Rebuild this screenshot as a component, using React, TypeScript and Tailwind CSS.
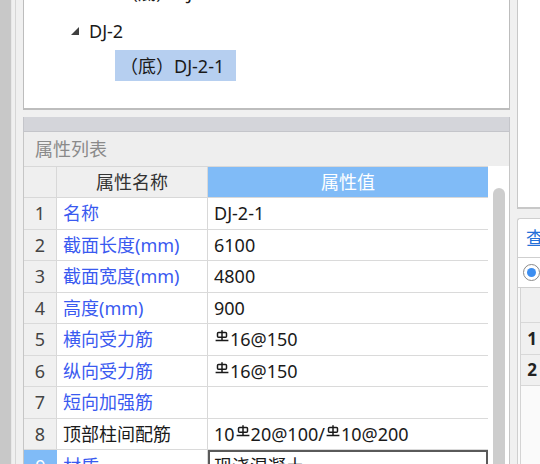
import type { ReactNode } from 'react';

// 钢筋等级符号（三级钢）
function Rebar() {
  return (
    <svg
      viewBox="0 0 14 12"
      className="mx-[1px] inline-block h-[12px] w-[14px] align-[4px]"
      fill="none"
      stroke="#1a1a1a"
      strokeWidth={1.5}
    >
      <rect x="2.5" y="2.6" width="9" height="4.6" rx="1" />
      <path d="M7 0.2v10.4M0.6 10.6h12.8" />
    </svg>
  );
}

// '§' 代表钢筋符号
function renderValue(value: string): ReactNode {
  const parts = value.split('§');
  return parts.map((p, i) => (
    <span key={i}>
      {i > 0 && <Rebar />}
      {p}
    </span>
  ));
}

interface Row {
  name: string;
  value: string;
  blue: boolean;
}

const rows: Row[] = [
  { name: '名称', value: 'DJ-2-1', blue: true },
  { name: '截面长度(mm)', value: '6100', blue: true },
  { name: '截面宽度(mm)', value: '4800', blue: true },
  { name: '高度(mm)', value: '900', blue: true },
  { name: '横向受力筋', value: '§16@150', blue: true },
  { name: '纵向受力筋', value: '§16@150', blue: true },
  { name: '短向加强筋', value: '', blue: true },
  { name: '顶部柱间配筋', value: '10§20@100/§10@200', blue: false },
];

function TreePanel() {
  return (
    <div className="h-[110px] shrink-0 overflow-hidden border-x border-b-2 border-[#bdbdbd] bg-white text-[#1a1a1a]">
      <div className="-mt-[25px] flex h-[35px] items-center whitespace-nowrap pl-[96px]">
        （底）DJ-1-1
      </div>
      <div className="mt-[3px] flex h-[35px] items-center pl-[47px]">
        <svg viewBox="0 0 8 8" className="h-[8px] w-[8px]">
          <path d="M8 0L8 8L0 8Z" fill="#404040" />
        </svg>
        <span className="ml-[10px]">DJ-2</span>
      </div>
      <div className="flex h-[35px] items-center pl-[91px]">
        <span className="flex h-[31px] w-[121px] items-center whitespace-nowrap bg-[#b6cff0] pl-[5px]">
          （底）DJ-2-1
        </span>
      </div>
    </div>
  );
}

function PropertyTable() {
  return (
    <div className="flex min-h-0 flex-1 overflow-hidden bg-white">
      <div className="w-[464px] shrink-0">
        {/* 表头 */}
        <div className="flex h-[32px] border-y border-[#d8d8d8]">
          <div className="w-[33px] shrink-0 border-r border-[#d8d8d8] bg-[#efefef]" />
          <div className="flex w-[151px] shrink-0 items-center justify-center border-r border-[#d8d8d8] bg-[#efefef] text-[#333]">
            属性名称
          </div>
          <div className="flex w-[280px] shrink-0 items-center justify-center bg-[#80bbf7] text-white">
            属性值
          </div>
        </div>

        {rows.map((row, i) => (
          <div key={i} className="flex h-[31.5px] border-b border-[#dadada]">
            <div className="flex w-[33px] shrink-0 items-center justify-center border-r border-[#d8d8d8] bg-[#f0f0f0] text-[#444]">
              {i + 1}
            </div>
            <div
              className={`flex w-[151px] shrink-0 items-center whitespace-nowrap border-r border-[#d8d8d8] pl-[6px] ${
                row.blue ? 'text-[#3a5af0]' : 'text-[#1a1a1a]'
              }`}
            >
              {row.name}
            </div>
            <div className="flex w-[280px] shrink-0 items-center whitespace-nowrap pl-[6px] text-[#1a1a1a]">
              <span>{renderValue(row.value)}</span>
            </div>
          </div>
        ))}

        {/* 当前编辑行 */}
        <div className="flex h-[31.5px]">
          <div className="flex w-[33px] shrink-0 items-center justify-center bg-[#80bbf7] text-white">
            9
          </div>
          <div className="flex w-[151px] shrink-0 items-center border-r border-[#d8d8d8] pl-[6px] text-[#3a5af0]">
            材质
          </div>
          <div className="flex w-[280px] shrink-0 items-center border-2 border-[#5a5a5a] pl-[4px] text-[#1a1a1a]">
            现浇混凝土
          </div>
        </div>
      </div>

      {/* 滚动条 */}
      <div className="w-[21px] shrink-0 pl-[5px] pt-[22px]">
        <div className="h-[400px] w-[12px] rounded-full bg-[#cdcdcd]" />
      </div>
    </div>
  );
}

function RightPanel() {
  return (
    <div className="flex w-[23px] shrink-0 flex-col overflow-hidden">
      <div className="h-[209px] shrink-0 border-b-2 border-l border-[#c8c8c8] bg-white" />
      <div className="h-[9px] shrink-0" />
      <div className="flex h-[39px] shrink-0 items-center overflow-hidden whitespace-nowrap rounded-tl-[3px] border-l border-t border-[#cfcfcf] bg-white pl-[8px] text-[#2470d8]">
        查看
      </div>
      <div className="flex h-[30px] shrink-0 items-center overflow-hidden border-l border-t border-[#cfcfcf] bg-white pl-[5px]">
        <div className="flex h-[17px] w-[17px] shrink-0 items-center justify-center rounded-full border border-[#8a8a8a] bg-white">
          <div className="h-[9px] w-[9px] rounded-full bg-[#3d8ef0]" />
        </div>
      </div>
      <div className="flex flex-1 flex-col border-l border-t border-[#cfcfcf] bg-[#fafafa] pl-[2px]">
        <div className="flex flex-1 flex-col border-l border-[#d4d4d4]">
          <div className="h-[35px] shrink-0 border-b border-[#d8d8d8] bg-[#f0f0f0]" />
          <div className="flex h-[31.5px] w-[22px] shrink-0 items-center justify-center border-b border-[#d8d8d8] bg-[#f0f0f0] text-[17px] font-bold text-[#222]">
            1
          </div>
          <div className="flex h-[31.5px] w-[22px] shrink-0 items-center justify-center border-b border-[#d8d8d8] bg-[#f0f0f0] text-[17px] font-bold text-[#222]">
            2
          </div>
        </div>
      </div>
    </div>
  );
}

export default function App() {
  return (
    <div className="flex h-[464px] w-[540px] overflow-hidden bg-[#f0f0f0] font-['Noto_Sans','Noto_Sans_CJK_SC',sans-serif] text-[18px] leading-none">
      {/* 左侧边栏 */}
      <div className="w-[11px] shrink-0 bg-[#c8c8c8]" />
      <div className="w-[5px] shrink-0 border-l border-r border-l-[#e8e8e8] border-r-[#d6d6d6]" />
      <div className="w-[7px] shrink-0" />

      {/* 主区域 */}
      <div className="flex w-[487px] shrink-0 flex-col">
        <TreePanel />
        <div className="h-[7px] shrink-0" />
        <div className="h-[15px] shrink-0 border-x border-b border-[#c4c5ca] bg-[#d4d5da]" />
        <div className="flex min-h-0 flex-1 flex-col border-x border-[#c6c6c6] bg-[#eeeeee]">
          <div className="flex h-[34px] shrink-0 items-center pl-[11px] text-[#8a8a8a]">
            属性列表
          </div>
          <PropertyTable />
        </div>
      </div>

      <div className="w-[7px] shrink-0" />
      <RightPanel />
    </div>
  );
}
